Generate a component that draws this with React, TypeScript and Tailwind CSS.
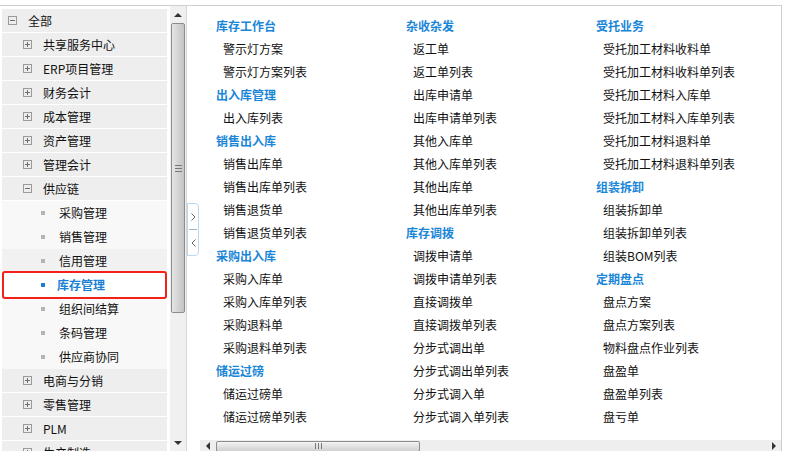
import { ReactNode } from "react";

type TreeNode = {
  label: string;
  level: 0 | 1 | 2;
  open?: boolean;
  active?: boolean;
  hover?: boolean;
};

const tree: TreeNode[] = [
  { label: "全部", level: 0, open: true },
  { label: "共享服务中心", level: 1 },
  { label: "ERP项目管理", level: 1 },
  { label: "财务会计", level: 1 },
  { label: "成本管理", level: 1 },
  { label: "资产管理", level: 1 },
  { label: "管理会计", level: 1 },
  { label: "供应链", level: 1, open: true },
  { label: "采购管理", level: 2 },
  { label: "销售管理", level: 2 },
  { label: "信用管理", level: 2, hover: true },
  { label: "库存管理", level: 2, active: true },
  { label: "组织间结算", level: 2 },
  { label: "条码管理", level: 2 },
  { label: "供应商协同", level: 2 },
  { label: "电商与分销", level: 1 },
  { label: "零售管理", level: 1 },
  { label: "PLM", level: 1 },
  { label: "生产制造", level: 1 },
];

type Group = { title: string; items: string[] };

const columns: Group[][] = [
  [
    { title: "库存工作台", items: ["警示灯方案", "警示灯方案列表"] },
    { title: "出入库管理", items: ["出入库列表"] },
    { title: "销售出入库", items: ["销售出库单", "销售出库单列表", "销售退货单", "销售退货单列表"] },
    { title: "采购出入库", items: ["采购入库单", "采购入库单列表", "采购退料单", "采购退料单列表"] },
    { title: "储运过磅", items: ["储运过磅单", "储运过磅单列表"] },
  ],
  [
    { title: "杂收杂发", items: ["返工单", "返工单列表", "出库申请单", "出库申请单列表", "其他入库单", "其他入库单列表", "其他出库单", "其他出库单列表"] },
    {
      title: "库存调拨",
      items: ["调拨申请单", "调拨申请单列表", "直接调拨单", "直接调拨单列表", "分步式调出单", "分步式调出单列表", "分步式调入单", "分步式调入单列表"],
    },
  ],
  [
    {
      title: "受托业务",
      items: ["受托加工材料收料单", "受托加工材料收料单列表", "受托加工材料入库单", "受托加工材料入库单列表", "受托加工材料退料单", "受托加工材料退料单列表"],
    },
    { title: "组装拆卸", items: ["组装拆卸单", "组装拆卸单列表", "组装BOM列表"] },
    { title: "定期盘点", items: ["盘点方案", "盘点方案列表", "物料盘点作业列表", "盘盈单", "盘盈单列表", "盘亏单"] },
  ],
];

function BoxIcon({ open }: { open?: boolean }) {
  return (
    <svg width="9" height="9" viewBox="0 0 9 9" className="shrink-0">
      <rect x="0.5" y="0.5" width="8" height="8" fill="none" stroke="#9a9a9a" />
      <line x1="2" y1="4.5" x2="7" y2="4.5" stroke="#6f6f6f" />
      {!open && <line x1="4.5" y1="2" x2="4.5" y2="7" stroke="#6f6f6f" />}
    </svg>
  );
}

function TreeRow({ node }: { node: TreeNode }) {
  if (node.level === 2) {
    if (node.active) {
      return (
        <div className="h-[28px] -my-[2px] relative z-10 flex items-center bg-white border-2 border-[#f5201a] rounded-[3px]">
          <span className="ml-[37px] w-[4px] h-[4px] bg-[#1a7fd4]" />
          <span className="ml-[12px] font-bold text-[#1a7fd4]">{node.label}</span>
        </div>
      );
    }
    return (
      <div className={`h-[24px] flex items-center ${node.hover ? "bg-[#f1f1f1]" : "bg-[#f8f8f8]"}`}>
        <span className="ml-[39px] w-[4px] h-[4px] bg-[#b4b4b4]" />
        <span className="ml-[14px] text-[#111]">{node.label}</span>
      </div>
    );
  }
  return (
    <div className="h-[23px] mb-[1px] flex items-center bg-[#eeeeee]">
      <span className={node.level === 0 ? "ml-[6px]" : "ml-[21px]"}>
        <BoxIcon open={node.open} />
      </span>
      <span className="ml-[11px] text-[#111]">{node.label}</span>
    </div>
  );
}

function Arrow({ dir }: { dir: "up" | "down" | "left" | "right" }): ReactNode {
  const pts = {
    up: "0,5 4,1 8,5",
    down: "0,1 4,5 8,1",
    left: "5,0 1,4 5,8",
    right: "1,0 5,4 1,8",
  }[dir];
  const vertical = dir === "up" || dir === "down";
  return (
    <svg width={vertical ? 8 : 6} height={vertical ? 6 : 8} viewBox={vertical ? "0 0 8 6" : "0 0 6 8"}>
      <polygon points={pts} fill="#333" />
    </svg>
  );
}

export default function App() {
  return (
    <div
      className="w-[787px] h-[451px] bg-white overflow-hidden text-[12px] leading-none"
      style={{ fontFamily: '"Noto Sans CJK SC", "Liberation Sans", sans-serif' }}
    >
      <div className="h-[5px]" />
      <div className="w-[782px] h-[446px] border-t border-r border-[#cfcfcf] flex">
        {/* Left tree panel */}
        <div className="w-[187px] shrink-0 flex border-r border-[#d6d6d6]">
          <div className="w-[170px] pt-[3px] pl-[2px] pr-[3px] overflow-hidden">
            {tree.map((n) => (
              <TreeRow key={n.label} node={n} />
            ))}
          </div>
          {/* vertical scrollbar */}
          <div className="w-[16px] bg-[#f0f0f0] flex flex-col items-center pt-[1px]">
            <div className="h-[16px] flex items-center justify-center">
              <Arrow dir="up" />
            </div>
            <div className="w-[14px] h-[290px] rounded-[2px] border border-[#8c8c8c] bg-gradient-to-r from-[#e6e6e6] via-[#d4d4d4] to-[#c4c4c4] flex items-center justify-center">
              <div className="flex flex-col gap-[2px]">
                <div className="w-[7px] h-px bg-[#777]" />
                <div className="w-[7px] h-px bg-[#777]" />
                <div className="w-[7px] h-px bg-[#777]" />
              </div>
            </div>
            <div className="flex-1" />
            <div className="h-[16px] flex items-center justify-center">
              <Arrow dir="down" />
            </div>
          </div>
        </div>

        {/* collapse toggle */}
        <div className="w-[13px] shrink-0 flex flex-col">
          <div className="h-[197px]" />
          <div className="w-[12px] h-[53px] border border-[#bcd8ef] rounded-r-[4px] flex flex-col items-center bg-white">
            <div className="flex-1 flex items-center justify-center">
              <svg width="5" height="8" viewBox="0 0 5 8">
                <polyline points="0.5,0.5 4,4 0.5,7.5" fill="none" stroke="#666" />
              </svg>
            </div>
            <div className="w-[8px] h-px bg-[#9fb6c9]" />
            <div className="flex-1 flex items-center justify-center">
              <svg width="5" height="8" viewBox="0 0 5 8">
                <polyline points="4.5,0.5 1,4 4.5,7.5" fill="none" stroke="#666" />
              </svg>
            </div>
          </div>
        </div>

        {/* content */}
        <div className="flex-1 flex flex-col min-w-0">
          <div className="flex-1 flex pt-[8px] pl-[16px] overflow-hidden">
            {columns.map((col, ci) => (
              <div key={ci} className="w-[190px] shrink-0">
                {col.map((g) => (
                  <div key={g.title}>
                    <div className="h-[23px] flex items-center font-bold text-[#1a86d8]">{g.title}</div>
                    {g.items.map((it) => (
                      <div key={it} className="h-[23px] flex items-center pl-[7px] text-[#111]">
                        {it}
                      </div>
                    ))}
                  </div>
                ))}
              </div>
            ))}
          </div>
          {/* horizontal scrollbar */}
          <div className="h-[12px] mb-[-1px] bg-[#eeeeee] flex items-center pl-[5px] pr-[4px]">
            <Arrow dir="left" />
            <div className="ml-[5px] w-[204px] h-[11px] border border-[#8c8c8c] rounded-[2px] bg-gradient-to-b from-[#f4f4f4] to-[#d0d0d0] flex items-center justify-center gap-[2px]">
              <div className="w-px h-[6px] bg-[#777]" />
              <div className="w-px h-[6px] bg-[#777]" />
              <div className="w-px h-[6px] bg-[#777]" />
            </div>
            <div className="flex-1" />
            <Arrow dir="right" />
          </div>
        </div>
      </div>
    </div>
  );
}
